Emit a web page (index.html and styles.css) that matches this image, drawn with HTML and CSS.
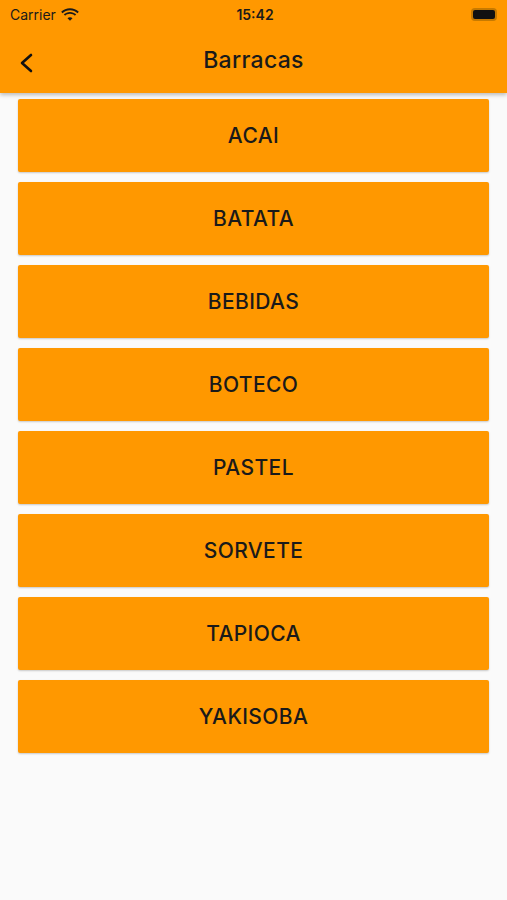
FILE: index.html
```html
<!DOCTYPE html>
<html lang="pt">
<head>
    <meta charset="UTF-8">
    <meta name="viewport" content="width=device-width, initial-scale=1.0">
    <title>Barracas</title>
    <link rel="stylesheet" href="styles.css">
</head>
<body>
    <!-- barra superior -->
    <header class="topbar">
        <div class="status">
            <div class="status-left">
                <span>Carrier</span>
                <svg class="wifi" width="18" height="13" viewBox="0 0 18 13">
                    <path d="M9 2.2c2.9 0 5.5 1.1 7.5 3l1.3-1.4C15.5 1.6 12.4.2 9 .2S2.5 1.6.2 3.8l1.3 1.4c2-1.9 4.6-3 7.5-3z" fill="#1a1a1a"/>
                    <path d="M9 5.8c1.9 0 3.6.7 4.9 1.9l1.3-1.4C13.6 4.8 11.4 3.9 9 3.9s-4.6.9-6.2 2.4l1.3 1.4C5.4 6.5 7.1 5.8 9 5.8z" fill="#1a1a1a"/>
                    <path d="M9 9.3c1 0 1.8.4 2.5 1L9 12.8 6.5 10.3c.7-.6 1.5-1 2.5-1z" fill="#1a1a1a"/>
                </svg>
            </div>
            <span class="time">15:42</span>
            <div class="battery"><div class="battery-fill"></div></div>
        </div>
        <div class="appbar">
            <svg class="back" width="14" height="20" viewBox="0 0 14 20">
                <path d="M12 2L3 10l9 8" fill="none" stroke="#111" stroke-width="2.6" stroke-linecap="round" stroke-linejoin="round"/>
            </svg>
            <h1>Barracas</h1>
        </div>
    </header>

    <!-- lista -->
    <div class="list">
        <div class="item">ACAI</div>
        <div class="item">BATATA</div>
        <div class="item">BEBIDAS</div>
        <div class="item">BOTECO</div>
        <div class="item">PASTEL</div>
        <div class="item">SORVETE</div>
        <div class="item">TAPIOCA</div>
        <div class="item">YAKISOBA</div>
    </div>
</body>
</html>
```

FILE: styles.css
```css
body {
    margin: 0;
    background-color: #fafafa;
    font-family: Inter, "Liberation Sans", Arial, sans-serif;
    color: #1a1a1a;
    height: 900px;
}
.topbar {
    background-color: #ff9800;
    height: 93px;
    box-shadow: 0 2px 4px rgba(0, 0, 0, 0.25);
    position: relative;
}
.status {
    height: 28px;
    display: flex;
    align-items: center;
    justify-content: space-between;
    padding: 0 7px 0 10px;
    font-size: 14px;
}
.status-left {
    display: flex;
    align-items: center;
    gap: 5px;
    width: 100px;
}
.time {
    font-weight: 600;
    font-size: 14px;
}
.battery {
    width: 100px;
    display: flex;
    justify-content: flex-end;
}
.battery-fill {
    width: 22px;
    height: 9px;
    background: #111;
    border: 2px solid #c77a00;
    border-radius: 4px;
    margin-right: 3px;
}
.appbar {
    height: 64px;
    display: flex;
    align-items: center;
    justify-content: center;
    position: relative;
}
.back {
    position: absolute;
    left: 19px;
    top: 25px;
}
.appbar h1 {
    margin: 0;
    font-size: 23px;
    font-weight: 500;
    letter-spacing: 0.3px;
}
.list {
    display: flex;
    flex-direction: column;
    gap: 10px;
    padding: 6px 18px 0 18px;
}
.item {
    height: 73px;
    background-color: #ff9800;
    border-radius: 2px;
    box-shadow: 0 1px 2px rgba(0, 0, 0, 0.2);
    display: flex;
    align-items: center;
    justify-content: center;
    font-size: 21px;
    font-weight: 500;
    letter-spacing: 0.4px;
}
```
